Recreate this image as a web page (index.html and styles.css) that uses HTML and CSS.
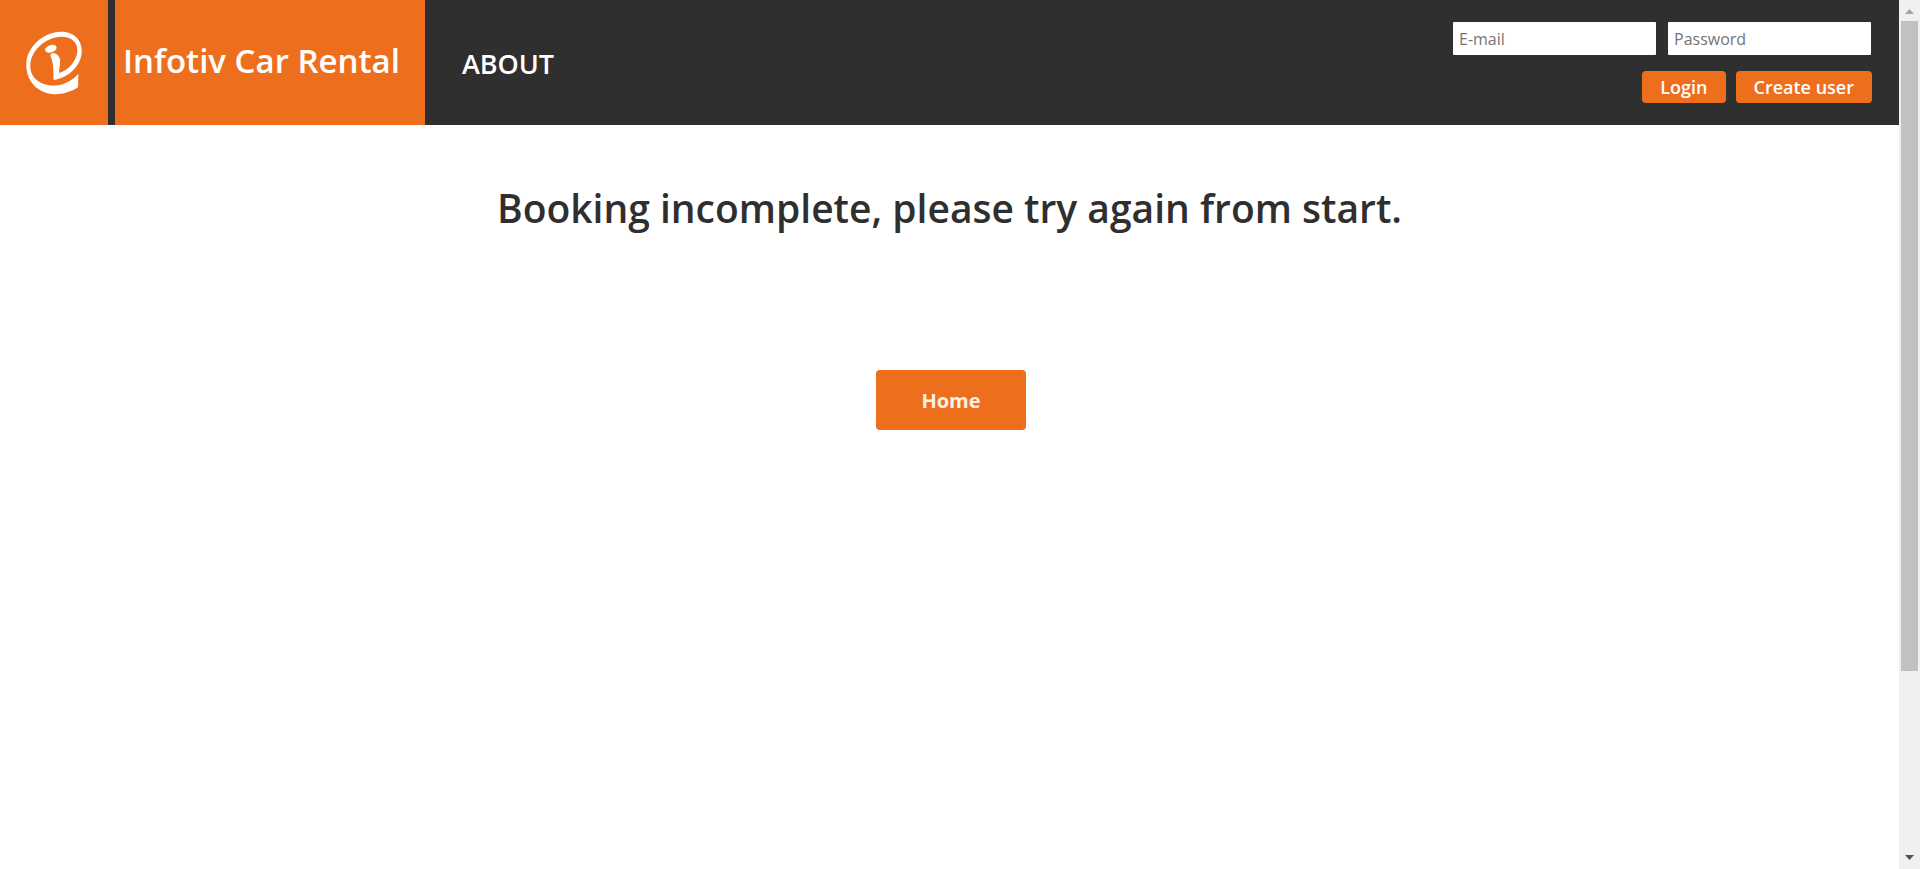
FILE: index.html
```html
<!DOCTYPE html>
<html lang="en">
<head>
<meta charset="utf-8">
<title>Infotiv Car Rental</title>
<link rel="stylesheet" href="styles.css">
</head>
<body>
<div class="page">
  <header class="header">
    <a class="logo" href="#" aria-label="Infotiv">
      <svg class="logo-mark" viewBox="70 85 190 210" aria-hidden="true">
        <path fill="#fff" d="M162 241 C162 220 163 195 155 174 C151 166 154 161 161 160 C172 161 181 170 182 182 C183 194 178 207 179 220 C205 214 233 184 234 153 C235 126 213 110 185 111 C137 112 92 155 92 199 C92 237 125 259 166 258 C195 256 219 242 237 223 L236 263 C216 276 191 284 166 284 C116 283 79 246 80 194 C81 142 130 97 185 96 C224 96 249 121 247 158 C244 199 208 234 162 241 Z"/>
        <ellipse cx="154" cy="147" rx="18" ry="11" transform="rotate(-17 154 147)" fill="#fff"/>
      </svg>
    </a>
    <a class="brand" href="#">Infotiv Car Rental</a>
    <nav class="nav"><a class="nav-link" href="#">ABOUT</a></nav>
    <form class="login">
      <div class="login-row fields">
        <input class="field" type="email" placeholder="E-mail" aria-label="E-mail">
        <input class="field" type="password" placeholder="Password" aria-label="Password">
      </div>
      <div class="login-row">
        <button class="button" type="button">Login</button>
        <button class="button" type="button">Create user</button>
      </div>
    </form>
  </header>
  <main class="main">
    <h1 class="message">Booking incomplete, please try again from start.</h1>
    <button class="home" type="button">Home</button>
  </main>
</div>
<div class="scrollbar" aria-hidden="true">
  <svg class="arrow" viewBox="0 0 21 21"><path fill="#a3a3a3" d="M6 14 L10.500 9 L15 14 Z"/></svg>
  <div class="track"><div class="thumb"></div></div>
  <svg class="arrow" viewBox="0 0 21 21"><path fill="#505050" d="M6 7 L10.500 12 L15 7 Z"/></svg>
</div>
</body>
</html>
```
FILE: styles.css
```css
* {
  box-sizing: border-box;
}

body {
  display: flex;
  min-height: 100vh;
  margin: 0;
  background: #fff;
  color: #2f2f2f;
  font-family: "Open Sans", sans-serif;
}

.page {
  flex: 1;
}

.header {
  display: flex;
  height: 125px;
  background: #2f2f2f;
}

.logo {
  display: flex;
  padding: 28px 22px 0 23px;
  margin-right: 7px;
  background: #ed6f1d;
}

.logo-mark {
  width: 63px;
  height: 70px;
}

.brand {
  padding: 37px 25px 0 8px;
  background: #ed6f1d;
  color: #fff;
  font-size: 33px;
  font-weight: 600;
  line-height: 48px;
  text-decoration: none;
  white-space: nowrap;
}

.nav {
  padding: 46px 37px 0;
}

.nav-link {
  color: #fff;
  font-size: 27px;
  font-weight: 600;
  line-height: 36px;
  text-decoration: none;
}

.login {
  display: flex;
  flex-direction: column;
  gap: 16px;
  margin-left: auto;
  padding: 22px 27px 0 0;
}

.login-row {
  display: flex;
  justify-content: flex-end;
  gap: 10px;
}

.fields {
  gap: 12px;
  padding-right: 1px;
}

.field {
  width: 203px;
  height: 33px;
  padding: 0 6px;
  border: 0;
  border-radius: 1px;
  background: #fff;
  font: 16px "Open Sans", sans-serif;
}

.field::placeholder {
  color: #757575;
}

.button {
  height: 32px;
  padding: 0 18px;
  border: 0;
  border-radius: 4px;
  background: #ed6f1d;
  color: #fff;
  font: 600 18px "Open Sans", sans-serif;
}

.main {
  display: flex;
  flex-direction: column;
  align-items: center;
  gap: 134px;
  padding-top: 55px;
}

.message {
  margin: 0;
  font-size: 39px;
  font-weight: 600;
  line-height: 56px;
}

.home {
  width: 150px;
  height: 60px;
  margin-left: 3px;
  border: 0;
  border-radius: 4px;
  background: #ed6f1d;
  color: #fff0e8;
  font: 700 20px "Open Sans", sans-serif;
}

.scrollbar {
  display: flex;
  flex-direction: column;
  width: 21px;
  background: #f0f0f0;
}

.arrow {
  display: block;
  width: 21px;
  height: 21px;
}

.track {
  flex: 1;
  padding: 0 2px;
}

.thumb {
  height: 78.6%;
  background: #c1c1c1;
}
```
